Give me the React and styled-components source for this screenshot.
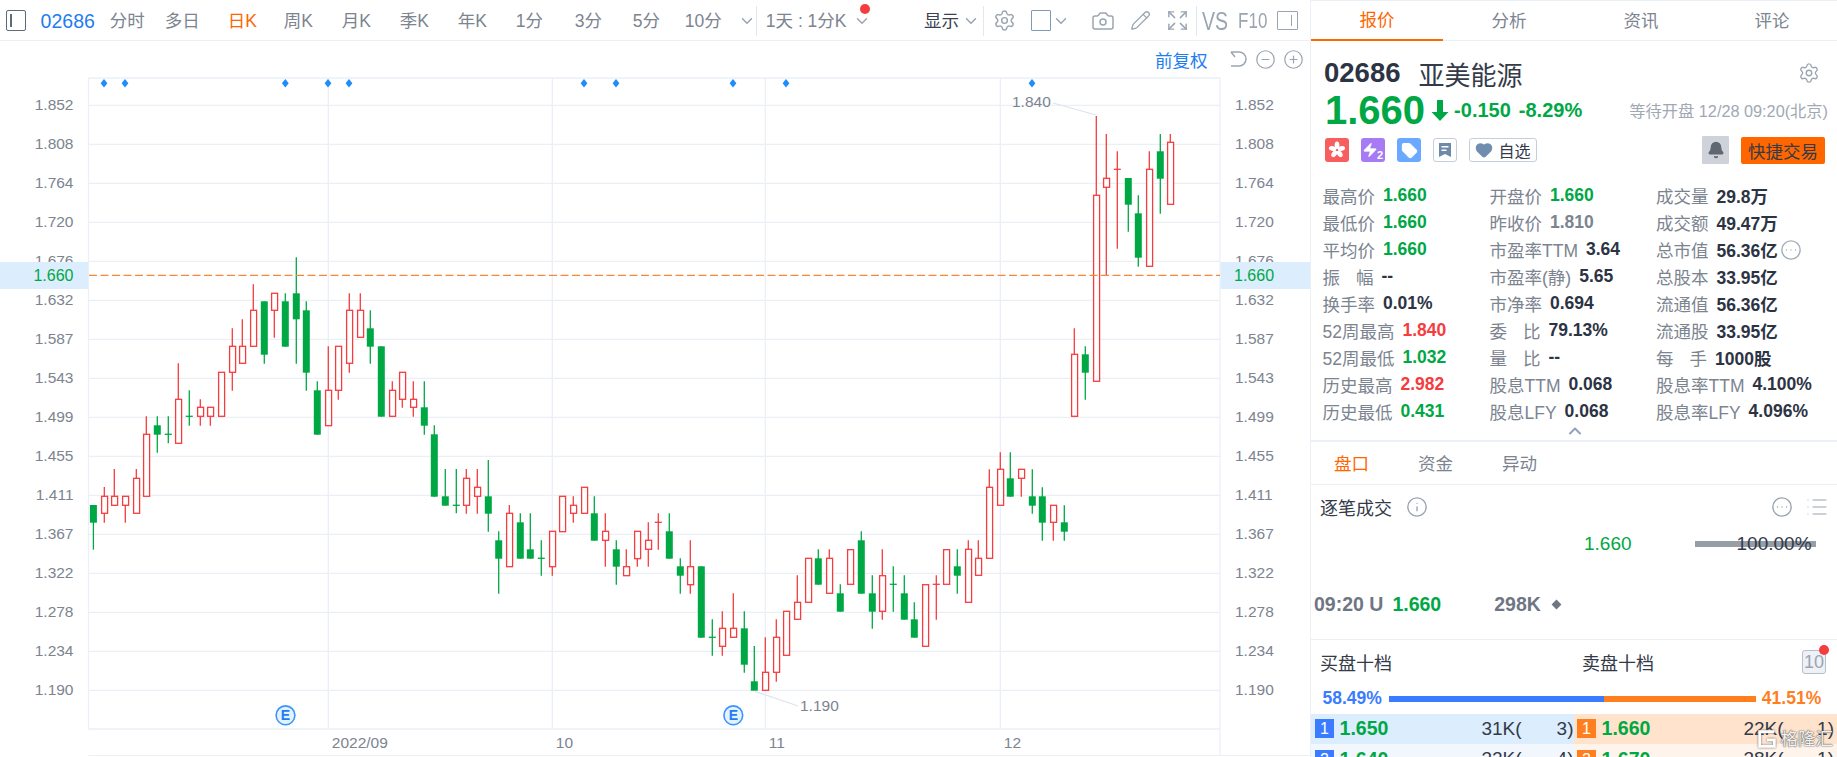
import React from "react";
import styled, { createGlobalStyle } from "styled-components";
import { Camera, ChevronDown, ChevronUp, CircleEllipsis, CircleMinus, CirclePlus, Expand, Heart, Info, List, Pencil, Settings, Bell, Zap, Tag } from "lucide-react";

const FONT = `"Liberation Sans", "Noto Sans CJK SC", sans-serif`;
const GREEN = "#00a845";
const RED = "#f53c3f";
const LINE = "#ebf0f6";
const GREY = "#7c8490";
const DARK = "#2c3444";
const ICON = "#9aa5b1";

const Global = createGlobalStyle`
  html, body { margin: 0; padding: 0; background: #fff; overflow: hidden; }
  body { font-family: ${FONT}; }
  * { box-sizing: border-box; }
`;

const Page = styled.div`
  display: flex;
  width: 1837px;
  height: 757px;
  overflow: hidden;
  position: relative;
`;

const Left = styled.div`
  width: 1311px;
  flex: none;
  display: flex;
  flex-direction: column;
  border-right: 1px solid ${LINE};
`;

const Toolbar = styled.div`
  height: 41px;
  flex: none;
  display: flex;
  align-items: center;
  padding: 1.5px 0 0 6px;
  border-bottom: 1.5px solid ${LINE};
  font-size: 17.5px;
  line-height: 22px;
  color: ${GREY};
  white-space: nowrap;
`;

const ModeIcon = styled.span`
  width: 20px;
  height: 21px;
  border: 1.5px solid #5f6b7a;
  border-radius: 2px;
  display: flex;
  align-items: center;
  padding-left: 3px;
  &::before {
    content: "";
    width: 1.5px;
    height: 13px;
    background: #5f6b7a;
  }
`;

const Code = styled.span`
  margin-left: 14.6px;
  font-size: 19.5px;
  color: #1e7df0;
`;

const Tab = styled.span`
  flex: none;
  margin-left: ${(p) => p.$ml || 0}px;
  width: ${(p) => (p.$w ? `${p.$w}px` : "auto")};
  color: ${(p) => (p.$active ? "#ff6600" : p.$dark ? "#3a4250" : GREY)};
`;

const Sep = styled.span`
  flex: none;
  width: 1px;
  height: 30px;
  margin-left: ${(p) => p.$ml}px;
  background: #e3e8ef;
`;

const Tool = styled.span`
  flex: none;
  display: flex;
  margin-left: ${(p) => p.$ml}px;
  color: ${ICON};
  position: relative;
`;

const Dot = styled.span`
  position: absolute;
  width: 10px;
  height: 10px;
  border-radius: 50%;
  background: ${RED};
  top: ${(p) => p.$top}px;
  right: ${(p) => p.$right}px;
`;

const SquareTool = styled.span`
  flex: none;
  width: 20px;
  height: 21px;
  margin-left: ${(p) => p.$ml}px;
  border: 1.5px solid #7d9ab9;
  border-radius: 1px;
`;

const PanelTool = styled.span`
  flex: none;
  width: 21px;
  height: 19px;
  margin-left: ${(p) => p.$ml}px;
  border: 1.5px solid ${ICON};
  border-radius: 1px;
  display: flex;
  justify-content: flex-end;
  align-items: center;
  padding-right: 5px;
  &::before {
    content: "";
    width: 1.5px;
    height: 11px;
    background: ${ICON};
  }
`;

const TallText = styled.span`
  flex: none;
  margin-left: ${(p) => p.$ml}px;
  font-size: ${(p) => p.$size}px;
  color: ${ICON};
  transform: scaleY(1.3);
`;

const ChartBar = styled.div`
  height: 36px;
  flex: none;
  display: flex;
  justify-content: flex-end;
  align-items: center;
  padding-right: 6.5px;
  gap: 7px;
  color: ${ICON};
`;

const Adjust = styled.span`
  font-size: 17.5px;
  color: #1e7df0;
  margin-right: 13px;
`;

const ChartSvg = styled.svg`
  display: block;
  width: 1310px;
  height: 679px;
  flex: none;
  font-family: ${FONT};
  font-size: 15.5px;
  fill: ${GREY};
`;

const Panel = styled.div`
  flex: 1;
  min-width: 0;
  display: flex;
  flex-direction: column;
  color: ${DARK};
`;

const PanelTabs = styled.div`
  height: 41px;
  flex: none;
  display: grid;
  grid-template-columns: 132px 132px 132px 130px;
  border-top: 1px solid ${LINE};
  border-bottom: 1.5px solid ${LINE};
`;

const PanelTab = styled.div`
  display: flex;
  justify-content: center;
  align-items: center;
  font-size: 17.5px;
  height: 40px;
  padding-bottom: 3px;
  color: ${(p) => (p.$active ? "#ff6600" : GREY)};
  border-bottom: ${(p) => (p.$active ? "2px solid #ff6600" : "none")};
`;

const NameRow = styled.div`
  height: 36px;
  margin-top: 14px;
  flex: none;
  display: flex;
  align-items: center;
  padding: 0 17px 0 13px;
`;

const StockCode = styled.span`
  font-size: 27.5px;
  font-weight: 700;
`;

const StockName = styled.span`
  font-size: 26px;
  margin-left: 18px;
  color: #333a48;
`;

const Push = styled.span`
  margin-left: auto;
  display: flex;
  color: ${ICON};
`;

const PriceRow = styled.div`
  height: 38px;
  flex: none;
  display: flex;
  align-items: center;
  padding: 0 9px 0 14px;
  color: ${GREEN};
`;

const BigPrice = styled.span`
  font-size: 40px;
  font-weight: 700;
  line-height: 38px;
`;

const Change = styled.span`
  font-size: 20px;
  font-weight: 700;
  margin-left: ${(p) => p.$ml}px;
`;

const Arrow = styled.svg`
  width: 18px;
  height: 23px;
  margin-left: 6px;
  flex: none;
`;

const Waiting = styled.span`
  margin-left: auto;
  font-size: 16.25px;
  color: #a0a8b4;
`;

const ActionRow = styled.div`
  height: 42px;
  flex: none;
  display: flex;
  align-items: center;
  gap: 12px;
  padding: 0 12px 0 14px;
`;

const Badge = styled.span`
  width: 24px;
  height: 24px;
  flex: none;
  border-radius: 3px;
  background: ${(p) => p.$bg || "#fff"};
  border: ${(p) => (p.$bg ? "none" : "1.5px solid #c5cedb")};
  display: flex;
  align-items: center;
  justify-content: center;
  color: #fff;
  position: relative;
`;

const BoltTwo = styled.span`
  position: absolute;
  right: 2px;
  bottom: 0;
  font-size: 11px;
  line-height: 13px;
  font-weight: 700;
`;

const FollowBtn = styled.span`
  width: 68px;
  height: 24px;
  flex: none;
  border: 1.5px solid #c5cedb;
  border-radius: 3px;
  display: flex;
  align-items: center;
  justify-content: center;
  gap: 5px;
  font-size: 16px;
  color: #333a48;
`;

const BellBtn = styled.span`
  width: 27px;
  height: 28px;
  flex: none;
  margin-left: auto;
  background: #cfd3d9;
  display: flex;
  align-items: center;
  justify-content: center;
  border-radius: 1px;
  color: #5f6772;
`;

const TradeBtn = styled.span`
  width: 84px;
  height: 27px;
  flex: none;
  background: #ff6600;
  border-radius: 2px;
  display: flex;
  align-items: center;
  justify-content: center;
  font-size: 17.5px;
  color: #333a48;
`;

const Stats = styled.div`
  margin-top: 11px;
  padding-left: 11.5px;
  flex: none;
  display: grid;
  grid-template-columns: 167px 166.5px 1fr;
  grid-auto-rows: 27px;
  font-size: 17.5px;
`;

const Stat = styled.div`
  display: flex;
  align-items: center;
  gap: 8px;
  white-space: nowrap;
`;

const Label = styled.span`
  color: ${GREY};
  display: inline-flex;
  justify-content: space-between;
  width: ${(p) => (p.$spread ? "51px" : "auto")};
`;

const tones = { up: RED, down: GREEN, flat: GREY, dark: DARK };

const Value = styled.span`
  font-weight: 700;
  color: ${(p) => tones[p.$tone || "dark"]};
`;

const MoreIcon = styled.span`
  display: flex;
  color: #a5adb9;
  margin-left: -6px;
`;

const Collapse = styled.div`
  height: 15px;
  flex: none;
  display: flex;
  justify-content: center;
  padding-left: 1px;
  color: #8ea2bc;
  border-bottom: 0;
  & svg { margin-top: -4px; }
`;

const SubTabs = styled.div`
  height: 44.5px;
  flex: none;
  display: flex;
  padding-left: 23px;
  gap: 49px;
  align-items: center;
  border-top: 2px solid ${LINE};
  border-bottom: 1.5px solid ${LINE};
  font-size: 17.5px;
`;

const Trades = styled.div`
  height: 155px;
  flex: none;
  border-bottom: 1.5px solid ${LINE};
`;

const TradesHead = styled.div`
  height: 44px;
  display: flex;
  align-items: center;
  padding: 0 8px 0 9px;
  font-size: 18px;
  color: #333a48;
`;

const HeadIcon = styled.span`
  display: flex;
  margin-left: ${(p) => p.$ml || "0"};
  color: ${(p) => p.$color || "#9aa3af"};
`;

const TickRow = styled.div`
  height: 30px;
  display: flex;
  align-items: center;
  font-size: 19px;
  margin-bottom: 30px;
`;

const TickPrice = styled.span`
  margin-left: 273px;
  color: ${GREEN};
`;

const TickBar = styled.div`
  position: relative;
  width: 121px;
  height: 6px;
  margin-left: 63px;
  background: #969ea8;
`;

const TickPct = styled.span`
  position: absolute;
  right: 4px;
  top: -8px;
  line-height: 22px;
  font-size: 19px;
  color: #333a48;
`;

const TradeRow = styled.div`
  height: 31px;
  display: flex;
  align-items: center;
  padding-left: 3px;
  font-size: 19.5px;
  font-weight: 700;
  color: #6f7683;
`;

const TradeCell = styled.span`
  margin-left: ${(p) => p.$ml || 0}px;
  color: ${(p) => (p.$green ? GREEN : "inherit")};
`;

const Diamond = styled.span`
  width: 7px;
  height: 7px;
  margin-left: 12px;
  background: #6f7683;
  transform: rotate(45deg);
`;

const BookHead = styled.div`
  height: 44px;
  flex: none;
  display: flex;
  align-items: center;
  padding-left: 9px;
  font-size: 18px;
  color: #333a48;
`;

const TenIcon = styled.span`
  position: relative;
  width: 24px;
  height: 24px;
  margin-left: 148px;
  border: 1.5px solid #b6bfcb;
  background: #eef1f5;
  border-radius: 3px;
  font-size: 18px;
  line-height: 22px;
  text-align: center;
  color: ${ICON};
`;

const RatioRow = styled.div`
  height: 30px;
  flex: none;
  display: flex;
  align-items: center;
  padding-left: 11.5px;
  font-size: 17.5px;
  font-weight: 700;
`;

const RatioText = styled.span`
  color: ${(p) => p.$color};
  margin-left: ${(p) => p.$ml || 0}px;
`;

const RatioBar = styled.div`
  width: 367px;
  height: 6px;
  margin-left: 7px;
  background: #ff7f1f;
`;

const RatioFill = styled.div`
  height: 100%;
  background: #3a7bff;
`;

const BookRow = styled.div`
  height: 30.5px;
  flex: none;
  display: flex;
`;

const Side = styled.div`
  width: ${(p) => (p.$sell ? "263.5px" : "262.5px")};
  flex: none;
  display: grid;
  grid-template-columns: 19px 147.4px 37px 1fr;
  align-items: center;
  padding: ${(p) => (p.$sell ? "0 3px 0 3.5px" : "0 0 0 4px")};
  font-size: 19px;
  color: #333a48;
  background: ${(p) => (p.$sell ? (p.$first ? "#ffe3cc" : "#fff4ec") : p.$first ? "#dcedfe" : "#f2f7fe")};
`;

const Level = styled.span`
  width: 19px;
  height: 19px;
  background: ${(p) => (p.$sell ? "#ff7f1f" : "#3a7bff")};
  color: #fff;
  font-size: 16px;
  line-height: 19px;
  text-align: center;
`;

const BookPrice = styled.span`
  padding-left: 5.6px;
  font-weight: 700;
  font-size: 19.5px;
  color: ${GREEN};
`;

const BookCount = styled.span`
  text-align: right;
`;

const Watermark = styled.div`
  position: absolute;
  right: 4px;
  bottom: 7px;
  display: flex;
  align-items: center;
  gap: 3px;
  font-size: 17.5px;
  line-height: 22px;
  color: rgba(255, 255, 255, 0.92);
  text-shadow: 0 0 1px #666, 0 0 1px #666, 0 0 2px rgba(80, 80, 80, 0.6);
`;

// x, body top, body bottom, high, low, colour
const candles = [
  [93.4, 505, 522.7, 505, 549.7, "g"], [104.3, 496.3, 513.3, 487, 522.7, "r"], [114.3, 496.3, 505.3, 469, 505.3, "r"],
  [125.3, 496.3, 505.3, 496.3, 522.7, "r"], [136.3, 478.3, 513.3, 469, 513.3, "r"], [146.3, 434.3, 496.3, 416.3, 496.3, "r"],
  [157.3, 425.3, 434.7, 416.3, 452.7, "g"], [168.3, 434.3, 434.3, 416.3, 443.3, "g"], [178.3, 399.3, 443.3, 363.3, 443.3, "r"],
  [189.3, 416.3, 416.3, 390.3, 425.7, "g"], [200.3, 407.3, 416.3, 399.3, 425.7, "r"], [210.3, 407.3, 416.3, 407.3, 425.7, "r"],
  [221.3, 372.3, 416.3, 372.3, 416.3, "r"], [232.3, 346.3, 372.3, 328.3, 390.7, "r"], [242.3, 346.3, 363.3, 319.3, 363.3, "r"],
  [253.3, 310.3, 346.3, 284.3, 346.3, "r"], [264.3, 301.3, 354.7, 301.3, 363.7, "g"], [274.3, 293.3, 310.3, 293.3, 337.7, "r"],
  [285.3, 301.3, 346.7, 293.3, 346.7, "g"], [296.3, 293.3, 319.3, 257.3, 363.7, "g"], [306.3, 310.3, 372.7, 301.3, 390.7, "g"],
  [317.3, 390.3, 434.7, 381.3, 434.7, "g"], [328.3, 390.3, 425.7, 346.3, 425.7, "r"], [338.3, 346.3, 390.3, 346.3, 399.7, "r"],
  [349.3, 310.3, 363.3, 293.3, 372.7, "r"], [360.3, 310.3, 337.3, 293.3, 337.3, "r"], [370.3, 328.3, 346.7, 310.3, 363.7, "g"],
  [381.3, 346.3, 416.7, 346.3, 416.7, "g"], [392.3, 390.3, 416.3, 381.3, 416.3, "r"], [402.3, 372.3, 399.3, 372.3, 407.7, "r"],
  [413.3, 399.3, 407.3, 381.3, 416.7, "r"], [424.3, 407.3, 425.7, 381.3, 434.7, "g"], [434.3, 434.3, 496.7, 425.3, 496.7, "g"],
  [445.3, 496.3, 505.7, 469, 505.7, "g"], [456.3, 505.3, 505.3, 469, 513.3, "g"], [466.3, 478.3, 505.3, 469, 513.7, "r"],
  [477.3, 487.3, 496.3, 469, 513.7, "r"], [488.3, 496.3, 513.7, 460, 531.7, "g"], [498.7, 540.3, 558.7, 531.3, 593.7, "g"],
  [509.3, 513.3, 566.7, 505, 566.7, "r"], [520.3, 522.3, 558.7, 513.3, 558.7, "g"], [530.3, 549.3, 558.7, 513.3, 558.7, "g"],
  [541.3, 558.3, 558.3, 540.3, 575.7, "g"], [552.3, 531.3, 566.7, 531.3, 575.7, "r"], [562.3, 496.3, 531.7, 496.3, 531.7, "r"],
  [573.3, 505.3, 513.3, 496.3, 522.7, "r"], [584.3, 487.3, 513.3, 487.3, 513.3, "r"], [594.3, 513.3, 540.7, 496.3, 540.7, "g"],
  [605.3, 531.3, 540.3, 513.3, 566.7, "r"], [616.3, 549.3, 566.7, 540.3, 584.7, "g"], [626.3, 566.7, 575.7, 549.3, 575.7, "r"],
  [637.3, 531.3, 558.7, 531.3, 566.7, "r"], [648.3, 540.3, 549.3, 522.3, 566.7, "r"], [658.3, 522.3, 522.3, 513.3, 549.7, "r"],
  [669.3, 531.3, 558.7, 513.3, 558.7, "g"], [680.3, 566.3, 575.7, 558.3, 593.7, "g"], [690.3, 566.7, 584.7, 540.3, 593.7, "r"],
  [701.3, 566.3, 637.7, 566.3, 637.7, "g"], [712.3, 637.3, 637.3, 619.3, 655.7, "g"], [722.3, 628.3, 646.3, 611.3, 655.7, "r"],
  [733.3, 628.3, 637.3, 593.3, 637.3, "r"], [744.3, 628.3, 664.7, 611.3, 672.7, "g"], [754.3, 681.3, 690.7, 646, 690.7, "g"],
  [765.3, 672.3, 690.3, 637.3, 690.3, "r"], [776.3, 637.3, 672.3, 619.3, 681.7, "r"], [786.3, 611.3, 655.3, 611.3, 655.3, "r"],
  [797.3, 602.3, 619.3, 575.3, 619.3, "r"], [808.3, 558.3, 602.3, 558.3, 602.3, "r"], [818.3, 558.3, 584.7, 549.3, 584.7, "g"],
  [829.3, 558.3, 593.3, 549.3, 593.3, "r"], [840.3, 593.3, 611.7, 584.3, 611.7, "g"], [850.3, 549.7, 584.3, 549.7, 584.3, "r"],
  [861.3, 540.3, 593.7, 531.3, 593.7, "g"], [872.3, 593.3, 611.7, 575.3, 628.7, "g"], [882.3, 575.7, 611.3, 549.3, 619.7, "r"],
  [893.3, 584.3, 584.3, 566.3, 611.7, "g"], [904.3, 593.3, 619.7, 575.3, 619.7, "g"], [914.3, 619.3, 637.7, 602.3, 637.7, "g"],
  [925.3, 584.7, 646.3, 584.7, 646.3, "r"], [936.3, 584.3, 584.3, 575.3, 619.7, "r"], [946.3, 549.7, 584.3, 549.7, 584.3, "r"],
  [957.3, 566.3, 575.7, 549.3, 593.7, "g"], [968.3, 549.3, 602.3, 540.3, 602.3, "r"], [978.3, 558.3, 575.3, 540.3, 575.3, "r"],
  [989.3, 487.3, 558.3, 469.3, 558.3, "r"], [1000.3, 469.3, 505.3, 452.3, 505.3, "r"], [1010.3, 478.3, 496.7, 452.3, 496.7, "g"],
  [1021.3, 469.3, 478.3, 469.3, 496.7, "r"], [1032.3, 496.3, 505.7, 469.3, 513.7, "g"], [1042.3, 496.3, 522.7, 487.3, 540.7, "g"],
  [1053.3, 505.3, 522.3, 505.3, 540.7, "r"], [1064.3, 522.3, 531.7, 505.3, 540.7, "g"], [1074.3, 354.3, 416.3, 328.3, 416.3, "r"],
  [1085.3, 354.3, 372.7, 346.3, 399.7, "g"], [1096.3, 195.3, 381.3, 116, 381.3, "r"], [1106.3, 178.3, 187.3, 134, 275.7, "r"],
  [1117.3, 169.3, 169.3, 151.3, 248.7, "r"], [1128.3, 178, 204.7, 178, 231.7, "g"], [1138.3, 213.3, 257.7, 195.3, 266.7, "g"],
  [1149.3, 169.3, 266.3, 151.3, 266.3, "r"], [1160.3, 151.3, 178.7, 134, 213.7, "g"], [1170.3, 142.3, 204.3, 134, 204.3, "r"],
];

const priceLabels = ["1.852", "1.808", "1.764", "1.720", "1.676", "1.632", "1.587", "1.543", "1.499", "1.455", "1.411", "1.367", "1.322", "1.278", "1.234", "1.190"];
const gridY = (i) => 105.3 + i * 39;
const dividends = [104, 125, 285.3, 328, 349, 584, 616, 733, 786, 1032];
const months = [
  { x: 328.3, label: "2022/09" },
  { x: 552.3, label: "10" },
  { x: 765.3, label: "11" },
  { x: 1000.3, label: "12" },
];

function Candle({ x, top, bottom, hi, lo, up }) {
  const color = up ? RED : GREEN;
  return (
    <g>
      <line x1={x} x2={x} y1={hi} y2={lo} stroke={color} strokeWidth="1.3" />
      {top === bottom ? (
        <line x1={x - 3.5} x2={x + 3.5} y1={top} y2={top} stroke={color} strokeWidth="1.3" />
      ) : up ? (
        <rect x={x - 2.7} y={top} width="6" height={bottom - top} fill="#fff" stroke={color} strokeWidth="1.3" />
      ) : (
        <rect x={x - 3.5} y={top} width="7" height={bottom - top} fill={color} />
      )}
    </g>
  );
}

function Earnings({ x }) {
  return (
    <g>
      <circle cx={x} cy="715.3" r="9.4" fill="#e4f1ff" stroke="#3894ff" strokeWidth="1.6" />
      <text x={x} y="720.3" textAnchor="middle" fontSize="14" fontWeight="700" fill="#1e7df0">E</text>
    </g>
  );
}

function Chart() {
  return (
    <ChartSvg viewBox="0 77 1310 679">
      <g stroke={LINE} strokeWidth="1.3">
        <line x1="88.5" x2="1220" y1="78" y2="78" />
        {priceLabels.map((p, i) => <line key={p} x1="88.5" x2="1220" y1={gridY(i)} y2={gridY(i)} />)}
        <line x1="88.5" x2="1220" y1="729" y2="729" />
        <line x1="88.5" x2="1310" y1="755.6" y2="755.6" />
        <line x1="88.5" x2="88.5" y1="78" y2="729" />
        <line x1="1220" x2="1220" y1="78" y2="756" />
        {months.map((m) => <line key={m.x} x1={m.x} x2={m.x} y1="78" y2="729" />)}
      </g>
      {priceLabels.map((p, i) => (
        <g key={p}>
          <text x="73.5" y={gridY(i) + 4.9} textAnchor="end">{p}</text>
          <text x="1235" y={gridY(i) + 4.9}>{p}</text>
        </g>
      ))}
      {months.map((m) => <text key={m.label} x={m.x + 3.5} y="747.5">{m.label}</text>)}
      {dividends.map((x) => <path key={x} d={`M${x} 79 l3.4 4.3 -3.4 4.3 -3.4 -4.3z`} fill="#1e8cff" />)}
      {candles.map(([x, top, bottom, hi, lo, c]) => (
        <Candle key={x} x={x} top={top} bottom={bottom} hi={hi} lo={lo} up={c === "r"} />
      ))}
      <rect x="0" y="262" width="88" height="27" fill="#dcedfe" />
      <rect x="1220.5" y="262" width="89.5" height="27" fill="#dcedfe" />
      <text x="73.5" y="280.8" textAnchor="end" fill={GREEN} fontSize="16">1.660</text>
      <text x="1234" y="280.8" fill={GREEN} fontSize="16">1.660</text>
      <line x1="89" x2="1220" y1="275.3" y2="275.3" stroke="#f5873a" strokeWidth="1.3" strokeDasharray="8 3.5" />
      <path d="M1053 103 L1096 115" stroke="#dde3ec" strokeWidth="1.2" fill="none" />
      <text x="1012" y="106.7">1.840</text>
      <path d="M754 691 L798 706" stroke="#dde3ec" strokeWidth="1.2" fill="none" />
      <text x="800" y="710.7">1.190</text>
      <Earnings x={285.5} />
      <Earnings x={733.3} />
    </ChartSvg>
  );
}

const stats = [
  [["最高价", "1.660", "down"], ["开盘价", "1.660", "down"], ["成交量", "29.8万"]],
  [["最低价", "1.660", "down"], ["昨收价", "1.810", "flat"], ["成交额", "49.47万"]],
  [["平均价", "1.660", "down"], ["市盈率TTM", "3.64"], ["总市值", "56.36亿", "dark", true]],
  [["振幅", "--", "dark", false, true], ["市盈率(静)", "5.65"], ["总股本", "33.95亿"]],
  [["换手率", "0.01%"], ["市净率", "0.694"], ["流通值", "56.36亿"]],
  [["52周最高", "1.840", "up"], ["委比", "79.13%", "dark", false, true], ["流通股", "33.95亿"]],
  [["52周最低", "1.032", "down"], ["量比", "--", "dark", false, true], ["每手", "1000股", "dark", false, true]],
  [["历史最高", "2.982", "up"], ["股息TTM", "0.068"], ["股息率TTM", "4.100%"]],
  [["历史最低", "0.431", "down"], ["股息LFY", "0.068"], ["股息率LFY", "4.096%"]],
];

function StatCell({ label, value, tone, more, spread }) {
  return (
    <Stat>
      {spread ? (
        <Label $spread><span>{label[0]}</span><span>{label[1]}</span></Label>
      ) : (
        <Label>{label}</Label>
      )}
      <Value $tone={tone}>{value}</Value>
      {more && <MoreIcon><CircleEllipsis size={22} strokeWidth={1.5} /></MoreIcon>}
    </Stat>
  );
}

function HkFlower() {
  return (
    <svg width="20" height="20" viewBox="0 0 20 20" fill="#fff">
      {[0, 72, 144, 216, 288].map((a) => (
        <ellipse key={a} cx="10" cy="5.4" rx="2.4" ry="3.8" transform={`rotate(${a} 10 10)`} />
      ))}
      <circle cx="10" cy="10" r="1.1" fill="#f95e5e" />
    </svg>
  );
}

const book = [
  { level: 1, buy: ["1.650", "31K(", "3)"], sell: ["1.660", "22K(", "1)"] },
  { level: 2, buy: ["1.640", "32K(", "4)"], sell: ["1.670", "38K(", "1)"] },
];

export default function App() {
  return (
    <Page>
      <Global />
      <Left>
        <Toolbar>
          <ModeIcon />
          <Code>02686</Code>
          <Tab $ml={15}>分时</Tab>
          <Tab $ml={20}>多日</Tab>
          <Tab $ml={28} $w={56} $active>日K</Tab>
          <Tab $w={58}>周K</Tab>
          <Tab $w={58}>月K</Tab>
          <Tab $w={58}>季K</Tab>
          <Tab $w={58}>年K</Tab>
          <Tab $w={59}>1分</Tab>
          <Tab $w={58}>3分</Tab>
          <Tab $w={52}>5分</Tab>
          <Tab>10分</Tab>
          <Tool $ml={16}><ChevronDown size={18} /></Tool>
          <Sep $ml={0} />
          <Tool $ml={0}><Dot $top={-17} $right={-113} /></Tool>
          <Tab $ml={9}>1天 : 1分K</Tab>
          <Tool $ml={6}><ChevronDown size={18} /></Tool>
          <Tab $ml={53.5} $dark>显示</Tab>
          <Tool $ml={3}><ChevronDown size={18} /></Tool>
          <Sep $ml={3} />
          <Tool $ml={9}><Settings size={23} strokeWidth={1.5} /></Tool>
          <SquareTool $ml={15} />
          <Tool $ml={1}><ChevronDown size={18} /></Tool>
          <Tool $ml={21}><Camera size={24} strokeWidth={1.5} /></Tool>
          <Tool $ml={15}><Pencil size={21} strokeWidth={1.5} /></Tool>
          <Tool $ml={15}><Expand size={23} strokeWidth={1.5} /></Tool>
          <Sep $ml={7} />
          <TallText $ml={5} $size={19.5}>VS</TallText>
          <TallText $ml={10} $size={17}>F10</TallText>
          <PanelTool $ml={10} />
        </Toolbar>
        <ChartBar>
          <Adjust>前复权</Adjust>
          <svg width="20" height="20" viewBox="0 0 20 20" fill="none" stroke="currentColor" strokeWidth="1.5">
            <path d="M3 3 L7 8 M3 3 H11 A7 7 0 0 1 11 17 H3" />
          </svg>
          <CircleMinus size={21} strokeWidth={1.4} />
          <CirclePlus size={21} strokeWidth={1.4} />
        </ChartBar>
        <Chart />
      </Left>
      <Panel>
        <PanelTabs>
          <PanelTab $active>报价</PanelTab>
          <PanelTab>分析</PanelTab>
          <PanelTab>资讯</PanelTab>
          <PanelTab>评论</PanelTab>
        </PanelTabs>
        <NameRow>
          <StockCode>02686</StockCode>
          <StockName>亚美能源</StockName>
          <Push><Settings size={22} strokeWidth={1.5} /></Push>
        </NameRow>
        <PriceRow>
          <BigPrice>1.660</BigPrice>
          <Arrow viewBox="0 0 18 23"><path d="M6 1h6v12h5.5L9 22 .5 13H6z" fill={GREEN} /></Arrow>
          <Change $ml={5}>-0.150</Change>
          <Change $ml={8}>-8.29%</Change>
          <Waiting>等待开盘 12/28 09:20(北京)</Waiting>
        </PriceRow>
        <ActionRow>
          <Badge $bg="#f95e5e"><HkFlower /></Badge>
          <Badge $bg="#a77bf3">
            <Zap size={16} fill="#fff" strokeWidth={1} style={{ marginLeft: -6 }} />
            <BoltTwo>2</BoltTwo>
          </Badge>
          <Badge $bg="#6ba8ff"><Tag size={17} fill="#fff" strokeWidth={1.5} /></Badge>
          <Badge>
            <svg width="14" height="16" viewBox="0 0 14 16">
              <path fillRule="evenodd" d="M1 1h12v14l-6-3-6 3zM3.5 4v1.5h7V4zM3.5 7.5V9h5V7.5z" fill="#6f8aa8" />
            </svg>
          </Badge>
          <FollowBtn><Heart size={18} fill="#6f8eaf" color="#6f8eaf" />自选</FollowBtn>
          <BellBtn><Bell size={18} fill="#5f6772" /></BellBtn>
          <TradeBtn>快捷交易</TradeBtn>
        </ActionRow>
        <Stats>
          {stats.flat().map(([label, value, tone, more, spread]) => (
            <StatCell key={label} label={label} value={value} tone={tone} more={more} spread={spread} />
          ))}
        </Stats>
        <Collapse><ChevronUp size={20} strokeWidth={2.4} /></Collapse>
        <SubTabs>
          <Tab $active>盘口</Tab>
          <Tab>资金</Tab>
          <Tab>异动</Tab>
        </SubTabs>
        <Trades>
          <TradesHead>
            逐笔成交
            <HeadIcon $ml="14px"><Info size={22} strokeWidth={1.5} /></HeadIcon>
            <HeadIcon $ml="auto"><CircleEllipsis size={22} strokeWidth={1.5} /></HeadIcon>
            <HeadIcon $ml="12px"><List size={24} strokeWidth={1} /></HeadIcon>
          </TradesHead>
          <TickRow>
            <TickPrice>1.660</TickPrice>
            <TickBar><TickPct>100.00%</TickPct></TickBar>
          </TickRow>
          <TradeRow>
            <TradeCell>09:20 U</TradeCell>
            <TradeCell $ml={9} $green>1.660</TradeCell>
            <TradeCell $ml={53}>298K</TradeCell>
            <Diamond />
          </TradeRow>
        </Trades>
        <BookHead>
          买盘十档
          <TradeCell $ml={190}>卖盘十档</TradeCell>
          <TenIcon>10<Dot $top={-6} $right={-4} /></TenIcon>
        </BookHead>
        <RatioRow>
          <RatioText $color="#3a7bff">58.49%</RatioText>
          <RatioBar><RatioFill style={{ width: "58.49%" }} /></RatioBar>
          <RatioText $color="#ff7f1f" $ml={6}>41.51%</RatioText>
        </RatioRow>
        {book.map((row) => (
          <BookRow key={row.level}>
            <Side $first={row.level === 1}>
              <Level>{row.level}</Level>
              <BookPrice>{row.buy[0]}</BookPrice>
              <span>{row.buy[1]}</span>
              <BookCount>{row.buy[2]}</BookCount>
            </Side>
            <Side $sell $first={row.level === 1}>
              <Level $sell>{row.level}</Level>
              <BookPrice>{row.sell[0]}</BookPrice>
              <span>{row.sell[1]}</span>
              <BookCount>{row.sell[2]}</BookCount>
            </Side>
          </BookRow>
        ))}
      </Panel>
      <Watermark>
        <svg width="22" height="22" viewBox="0 0 24 24" fill="none" stroke="#fff" strokeWidth="3" style={{ filter: "drop-shadow(0 0 1px #666)" }}>
          <path d="M20 4H4v16h16v-7h-8" />
        </svg>
        格隆汇
      </Watermark>
    </Page>
  );
}
